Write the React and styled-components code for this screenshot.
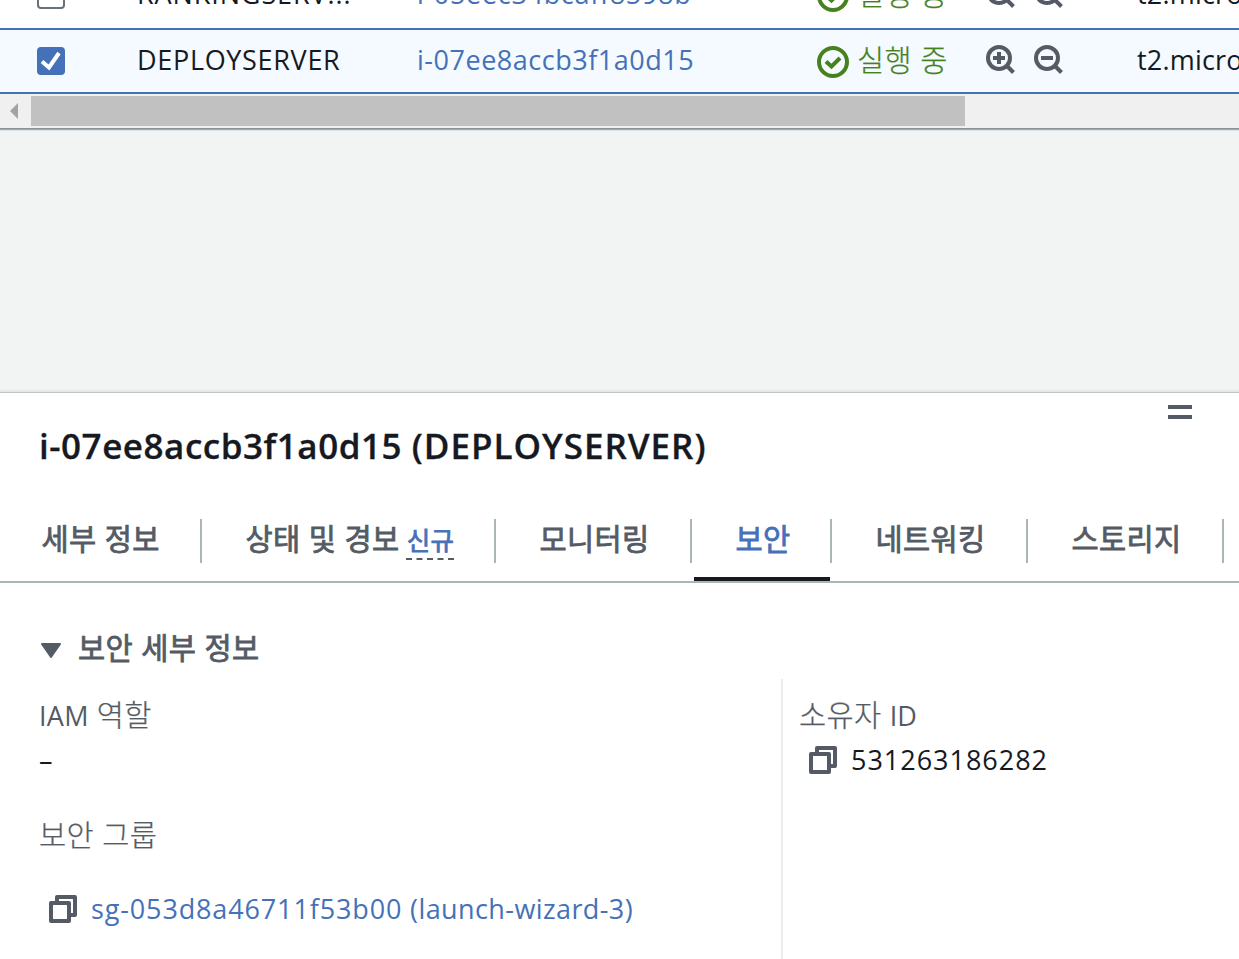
import React from 'react';
import styled, { createGlobalStyle } from 'styled-components';

const Global = createGlobalStyle`
  * { box-sizing: border-box; }
  html, body { margin: 0; padding: 0; }
  body {
    background: #f2f3f3;
    color: #16191f;
    font-family: "Open Sans", "Noto Sans CJK KR", sans-serif;
    font-size: 27px;
    overflow: hidden;
  }
`;

const colors = { link: '#4571b8', ok: '#45821f', grey: '#545b64', line: '#aab7b8' };

const Page = styled.div`
  width: 1239px;
  height: 959px;
  overflow: hidden;
  display: flex;
  flex-direction: column;
`;

const Latin = styled.span`
  font-family: "Open Sans", sans-serif;
  font-size: 27px;
  letter-spacing: ${(p) => p.$ls || 0}px;
  line-height: 38px;
  white-space: pre;
`;

const Spaced = styled.span`
  letter-spacing: ${(p) => p.$ls}px;
`;

const Hangul = styled.span`
  font-family: "Noto Sans CJK KR", sans-serif;
  font-size: ${(p) => p.$size || 29.5}px;
  font-weight: ${(p) => (p.$strong ? 400 : 300)};
  -webkit-text-stroke: ${(p) => (p.$strong ? '0.8px' : '0.25px')} currentColor;
  line-height: 38px;
  letter-spacing: 0.4px;
  word-spacing: 1.2px;
  white-space: pre;
`;

const Link = styled(Latin)`
  color: ${colors.link};
`;

const Table = styled.div`
  height: 94px;
  flex: none;
  display: flex;
  flex-direction: column;
  justify-content: flex-end;
  overflow: hidden;
  background: #fff;
`;

const Row = styled.div`
  flex: none;
  display: flex;
  align-items: center;
  height: 66px;
  padding-left: 37px;
  background: ${(p) => (p.$selected ? '#f4faff' : '#fff')};
  border-top: 2px solid ${(p) => (p.$selected ? colors.link : 'transparent')};
  border-bottom: 2px solid ${(p) => (p.$selected ? colors.link : 'transparent')};
  white-space: nowrap;
`;

const Cell = styled.div`
  flex: none;
  width: ${(p) => p.$w}px;
  height: 62px;
  padding-bottom: ${(p) => (p.$text ? 2 : 0)}px;
  display: flex;
  align-items: center;
`;

const CheckBox = styled.div`
  width: 28px;
  height: 28px;
  border-radius: 4px;
  border: 2px solid ${(p) => (p.$on ? colors.link : '#687078')};
  background: ${(p) => (p.$on ? colors.link : '#fff')};
  display: flex;
  svg { width: 24px; height: 24px; }
`;

const Status = styled.div`
  display: flex;
  align-items: center;
  gap: 8px;
  width: 169px;
  color: ${colors.ok};
  svg { margin-top: 2px; }
  span { padding-bottom: 6px; }
`;

const Magnifiers = styled.div`
  display: flex;
  gap: 18px;
  padding-bottom: 3px;
  color: ${colors.grey};
`;

const ScrollTrack = styled.div`
  flex: none;
  height: 34px;
  display: flex;
  align-items: center;
  background: #f0f0f0;
`;

const ScrollArrow = styled.svg`
  width: 31px;
  height: 34px;
`;

const ScrollThumb = styled.div`
  width: 934px;
  height: 30px;
  background: #c1c1c1;
`;

const Gap = styled.div`
  flex: none;
  height: 264px;
  background: linear-gradient(#879196 0 1px, #a4abae 1px 2px, #dde1e1 2px 3px, #f2f3f3 3px 261px, #ebecec 262px, #e4e6e6 264px);
`;

const Panel = styled.section`
  flex: 1;
  background: #fff;
  border-top: 1px solid #bfc4c7;
  display: flex;
  flex-direction: column;
`;

const PanelHead = styled.header`
  height: 126px;
  padding: 12px 47px 0 39px;
  display: flex;
  justify-content: space-between;
`;

const Title = styled.h2`
  margin: 18px 0 0;
  line-height: 46px;
  font-size: 35px;
  font-weight: 600;
  -webkit-text-stroke: 0.3px currentColor;
`;

const Grip = styled.div`
  width: 24px;
  height: 14px;
  border: solid ${colors.grey};
  border-width: 4px 0;
`;

const Tabs = styled.nav`
  height: 64px;
  flex: none;
  display: flex;
  border-bottom: 2px solid ${colors.line};
  overflow: hidden;
`;

const Tab = styled.div`
  flex: none;
  width: ${(p) => p.$w}px;
  height: 44px;
  padding-left: ${(p) => p.$pad || 43.5}px;
  border-right: 2px solid ${colors.line};
  display: flex;
  white-space: nowrap;
  color: ${(p) => (p.$active ? colors.link : colors.grey)};
  & > span { margin-top: -1px; }
`;

const ActiveTab = styled.div`
  flex: none;
  width: 140px;
  height: 62px;
  display: flex;
  flex-direction: column;
  justify-content: space-between;
`;

const ActiveBar = styled.div`
  height: 4px;
  width: 136px;
  margin-left: 2px;
  background: #16191f;
`;

const NewTag = styled.div`
  display: flex;
  flex-direction: column;
  margin-left: 6px;
  color: ${colors.link};
  span {
    margin: 4px 0 0 1px;
    height: 35px;
    line-height: 32px;
  }
`;

const Body = styled.div`
  flex: 1;
  padding: 44px 0 0 39px;
`;

const SectionTitle = styled.div`
  display: flex;
  align-items: center;
  height: 38px;
  gap: 15px;
  color: ${colors.grey};
  svg { margin-top: 9px; }
`;

const Columns = styled.div`
  display: flex;
  height: 280px;
  margin-top: 14px;
`;

const Column = styled.div`
  width: ${(p) => p.$w}px;
  padding: 15px 0 0 ${(p) => p.$pad || 0}px;
  border-left: ${(p) => (p.$divided ? '2px solid #eaeded' : '0')};
`;

const Label = styled.div`
  height: 38px;
  display: flex;
  align-items: baseline;
  gap: 8px;
  margin-top: ${(p) => p.$mt || 0}px;
  color: ${colors.grey};
`;

const Value = styled.div`
  display: flex;
  align-items: center;
  height: 38px;
  gap: 14px;
  margin-top: ${(p) => p.$mt || 0}px;
  padding-left: ${(p) => p.$pl || 0}px;
`;

const CheckCircle = () => (
  <svg width="32" height="32" viewBox="0 0 32 32" fill="none" stroke={colors.ok} strokeWidth="4">
    <circle cx="16" cy="16" r="14" />
    <path d="M9 15.500l5.500 5 8.500-8.500" />
  </svg>
);

const Magnifier = ({ plus }) => (
  <svg width="30" height="30" viewBox="0 0 30 30" fill="none" stroke="currentColor" strokeWidth="4">
    <circle cx="13" cy="13" r="11" />
    <path d="M20.500 20.500l7 7" />
    <path d={plus ? 'M7 13h12M13 7v12' : 'M7 13h12'} />
  </svg>
);

const CopyIcon = () => (
  <svg width="28" height="28" viewBox="0 0 28 28" fill="none" stroke={colors.grey} strokeWidth="4" strokeLinejoin="round">
    <path d="M8 8V2H26V20H20" />
    <path d="M2 8H20V26H2Z" />
  </svg>
);

const InstanceRow = ({ selected, name, nameLs, id, idLs }) => (
  <Row $selected={selected}>
    <Cell $w={100}>
      <CheckBox $on={selected}>
        {selected && (
          <svg viewBox="0 0 24 24" fill="none" stroke="#fff" strokeWidth="4">
            <path d="M3 12.500l7 6L20 4" />
          </svg>
        )}
      </CheckBox>
    </Cell>
    <Cell $w={280} $text><Latin $ls={nameLs}>{name}</Latin></Cell>
    <Cell $w={400} $text><Link $ls={idLs}>{id}</Link></Cell>
    <Cell $w={320}>
      <Status><CheckCircle /><Hangul>실행 중</Hangul></Status>
      <Magnifiers><Magnifier plus /><Magnifier /></Magnifiers>
    </Cell>
    <Cell $w={120} $text><Latin $ls={0.2}>t2.micro</Latin></Cell>
  </Row>
);

export default function App() {
  return (
    <Page>
      <Global />
      <Table>
        <InstanceRow name="RANKINGSERV..." nameLs={0.9} id="i-05eec34bcaff8598b" idLs={0.68} />
        <InstanceRow selected name="DEPLOYSERVER" nameLs={0.68} id="i-07ee8accb3f1a0d15" idLs={0.52} />
      </Table>
      <ScrollTrack>
        <ScrollArrow viewBox="0 0 31 34"><path d="M18 9v16l-8-8z" fill="#a3a3a3" /></ScrollArrow>
        <ScrollThumb />
      </ScrollTrack>
      <Gap />
      <Panel>
        <PanelHead>
          <Title>
            <Spaced $ls={0.53}>i-07ee8accb3f1a0d15 </Spaced>
            <Spaced $ls={0.98}>(DEPLOYSERVER)</Spaced>
          </Title>
          <Grip />
        </PanelHead>
        <Tabs>
          <Tab $w={202} $pad={41.5}><Hangul $strong>세부 정보</Hangul></Tab>
          <Tab $w={294}>
            <Hangul $strong>상태 및 경보</Hangul>
            <NewTag>
              <Hangul $strong $size={25.5}>신규</Hangul>
              <svg width="48" height="2"><path d="M0 1H48" stroke={colors.grey} strokeWidth="2" strokeDasharray="6 4.500" /></svg>
            </NewTag>
          </Tab>
          <Tab $w={196}><Hangul $strong>모니터링</Hangul></Tab>
          <ActiveTab>
            <Tab $w={140} $active><Hangul $strong>보안</Hangul></Tab>
            <ActiveBar />
          </ActiveTab>
          <Tab $w={196}><Hangul $strong>네트워킹</Hangul></Tab>
          <Tab $w={196}><Hangul $strong>스토리지</Hangul></Tab>
        </Tabs>
        <Body>
          <SectionTitle>
            <svg width="24" height="18" viewBox="0 0 24 18">
              <path d="M3 2H21L12 15Z" fill={colors.grey} stroke={colors.grey} strokeWidth="2" strokeLinejoin="round" />
            </svg>
            <Hangul $strong>보안 세부 정보</Hangul>
          </SectionTitle>
          <Columns>
            <Column $w={742}>
              <Label><Latin $ls={0.3}>IAM</Latin><Hangul>역할</Hangul></Label>
              <Value $mt={9}><Latin>–</Latin></Value>
              <Label $mt={35}><Hangul>보안 그룹</Hangul></Label>
              <Value $mt={38} $pl={10}>
                <CopyIcon />
                <Link>
                  <Spaced $ls={0.86}>sg-053d8a46711f53b00 </Spaced>
                  <Spaced $ls={0.4}>(launch-wizard-3)</Spaced>
                </Link>
              </Value>
            </Column>
            <Column $w={458} $pad={16} $divided>
              <Label><Hangul>소유자</Hangul><Latin>ID</Latin></Label>
              <Value $mt={9} $pl={10}><CopyIcon /><Latin $ls={0.98}>531263186282</Latin></Value>
            </Column>
          </Columns>
        </Body>
      </Panel>
    </Page>
  );
}
